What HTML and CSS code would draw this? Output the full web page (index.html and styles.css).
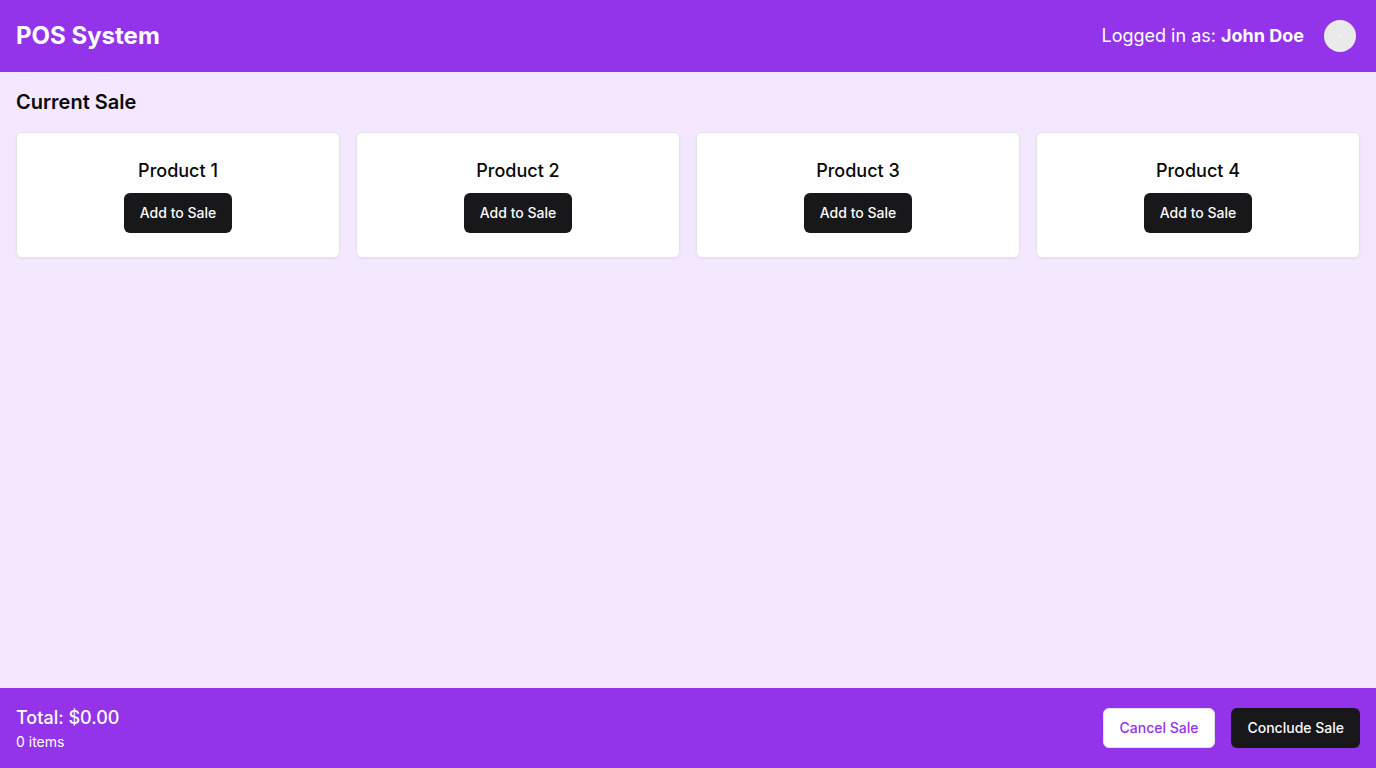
FILE: index.html
```html
<!DOCTYPE html>
<html lang="en">
<head>
<meta charset="utf-8">
<meta name="viewport" content="width=device-width, initial-scale=1">
<title>POS System</title>
<link rel="stylesheet" href="styles.css">
</head>
<body class="app">
<header class="header">
  <h1 class="brand">POS System</h1>
  <div class="account">
    <p class="user">Logged in as: <strong class="user-name">John Doe</strong></p>
    <button class="account-button" type="button" aria-label="Account">
      <svg class="avatar" viewBox="0 0 32 32" aria-hidden="true"><circle cx="16" cy="16" r="16" fill="#eaeaea"/><circle cx="16" cy="16" r="2" fill="#efefef"/></svg>
    </button>
  </div>
</header>
<main class="main">
  <h2 class="section-title">Current Sale</h2>
  <div class="products">
    <article class="card"><h3 class="product-name">Product 1</h3><button class="button button-dark" type="button">Add to Sale</button></article>
    <article class="card"><h3 class="product-name">Product 2</h3><button class="button button-dark" type="button">Add to Sale</button></article>
    <article class="card"><h3 class="product-name">Product 3</h3><button class="button button-dark" type="button">Add to Sale</button></article>
    <article class="card"><h3 class="product-name">Product 4</h3><button class="button button-dark" type="button">Add to Sale</button></article>
  </div>
</main>
<footer class="footer">
  <div class="summary">
    <p class="total">Total: $0.00</p>
    <p class="items">0 items</p>
  </div>
  <div class="actions">
    <button class="button button-outline" type="button">Cancel Sale</button>
    <button class="button button-dark" type="button">Conclude Sale</button>
  </div>
</footer>
</body>
</html>
```
FILE: styles.css
```css
* {
  box-sizing: border-box;
  margin: 0;
}

.app {
  display: flex;
  flex-direction: column;
  min-height: 100vh;
  background: #f3e8ff;
  color: #09090b;
  font-family: Inter, sans-serif;
  font-size: 16px;
  line-height: 24px;
}

.header,
.footer {
  display: flex;
  align-items: center;
  justify-content: space-between;
  padding: 16px;
  background: #9333ea;
  color: #fff;
}

.brand {
  font-size: 24px;
  font-weight: 700;
  line-height: 32px;
}

.account {
  display: flex;
  align-items: center;
  gap: 16px;
}

.user {
  font-size: 18px;
  line-height: 28px;
}

.user-name {
  font-weight: 700;
}

.account-button {
  display: flex;
  align-items: center;
  justify-content: center;
  width: 40px;
  height: 40px;
  padding: 0;
  border: 0;
  border-radius: 6px;
  background: transparent;
  cursor: pointer;
}

.avatar {
  width: 32px;
  height: 32px;
}

.main {
  flex: 1;
  padding: 16px;
}

.section-title {
  margin-bottom: 16px;
  font-size: 20px;
  font-weight: 600;
  line-height: 28px;
}

.products {
  display: grid;
  grid-template-columns: repeat(4, 1fr);
  gap: 16px;
}

.card {
  display: flex;
  flex-direction: column;
  align-items: center;
  gap: 8px;
  padding: 24px;
  border: 1px solid #e4e4e7;
  border-radius: 6px;
  background: #fff;
  box-shadow: 0 1px 2px rgba(0, 0, 0, 0.05);
}

.product-name {
  font-size: 18px;
  font-weight: 500;
  line-height: 28px;
}

.button {
  height: 40px;
  padding: 0 16px;
  border: 0;
  border-radius: 6px;
  font-family: inherit;
  font-size: 14px;
  font-weight: 500;
  line-height: 20px;
  cursor: pointer;
}

.button-dark {
  background: #18181b;
  color: #fafafa;
}

.button-outline {
  border: 1px solid #e4e4e7;
  background: #fff;
  color: #9333ea;
}

.total {
  font-size: 18px;
  font-weight: 500;
  line-height: 28px;
}

.items {
  font-size: 14px;
  line-height: 20px;
}

.actions {
  display: flex;
  gap: 16px;
}
```
